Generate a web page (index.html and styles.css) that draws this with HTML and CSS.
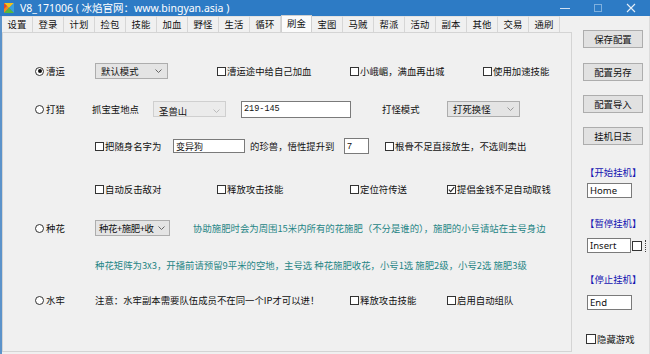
FILE: index.html
```html
<!DOCTYPE html>
<html>
<head>
<meta charset="utf-8" />
<title>V8_171006</title>
<link rel="stylesheet" href="styles.css">
</head>
<body>
<div class="win">
  <div class="titlebar">
    <svg class="logo" viewBox="0 0 12 12">
      <polygon points="1,1 6,6 1,11" fill="#f08a1c"/>
      <polygon points="1,1 11,1 6,6" fill="#f4c21a"/>
      <polygon points="11,1 11,11 6,6" fill="#3aa0e0"/>
      <polygon points="1,11 6,6 11,11" fill="#59b83a"/>
      <polygon points="1,1 4,4 1,7" fill="#e5452a"/>
    </svg>
    <div class="title">V8_171006 ( 冰焰官网：www.bingyan.asia )</div>
    <div class="ctrls">
      <span class="ctl"><svg width="10" height="10" viewBox="0 0 10 10"><line x1="0" y1="5.5" x2="10" y2="5.5" stroke="#cfe0f2" stroke-width="1"/></svg></span>
      <span class="ctl"><svg width="10" height="10" viewBox="0 0 10 10"><rect x="1.5" y="1.5" width="7" height="7" fill="none" stroke="#7fb0de" stroke-width="1"/></svg></span>
      <span class="ctl"><svg width="10" height="10" viewBox="0 0 10 10"><path d="M1 1L9 9M9 1L1 9" stroke="#e6eff8" stroke-width="1.1"/></svg></span>
    </div>
  </div>

  <div class="body">
    <div class="tabwrap">
      <ul class="tabs">
        <li>设置</li><li>登录</li><li>计划</li><li>捡包</li><li>技能</li><li>加血</li>
        <li>野怪</li><li>生活</li><li>循环</li><li class="on">刷金</li><li>宝图</li><li>马贼</li>
        <li>帮派</li><li>活动</li><li>副本</li><li>其他</li><li>交易</li><li>通刷</li>
      </ul>

      <div class="page">
        <!-- 漕运 -->
        <div class="row">
          <label class="radio on lead"><i></i>漕运</label>
          <div class="sel s73"><span>默认模式</span><svg width="7" height="4" viewBox="0 0 7 4"><polyline points="0.5,0.5 3.5,3.5 6.5,0.5" fill="none" stroke="#666"/></svg></div>
          <label class="chk c-add"><i></i>漕运途中给自己加血</label>
          <label class="chk c133"><i></i>小峨嵋，满血再出城</label>
          <label class="chk"><i></i>使用加速技能</label>
        </div>

        <!-- 打猎 -->
        <div class="row r2">
          <label class="radio lead2"><i></i>打猎</label>
          <span class="txt t-place">抓宝宝地点</span>
          <div class="sel s73 pale"><span>圣兽山</span><svg width="7" height="4" viewBox="0 0 7 4"><polyline points="0.5,0.5 3.5,3.5 6.5,0.5" fill="none" stroke="#bbb"/></svg></div>
          <input class="inp i-pos" type="text" value="219-145" />
          <span class="txt t-mode">打怪模式</span>
          <div class="sel s73"><span>打死换怪</span><svg width="7" height="4" viewBox="0 0 7 4"><polyline points="0.5,0.5 3.5,3.5 6.5,0.5" fill="none" stroke="#999"/></svg></div>
        </div>

        <div class="row r3">
          <span class="lead"></span>
          <label class="chk c78"><i></i>把随身名字为</label>
          <input class="inp i-name" type="text" value="变异狗" />
          <span class="txt t-pet">的珍兽，悟性提升到</span>
          <input class="inp i-num" type="text" value="7" />
          <label class="chk"><i></i>根骨不足直接放生，不选则卖出</label>
        </div>

        <div class="row r4">
          <span class="lead"></span>
          <label class="chk c122"><i></i>自动反击敌对</label>
          <label class="chk c133"><i></i>释放攻击技能</label>
          <label class="chk c97"><i></i>定位符传送</label>
          <label class="chk on"><i><svg width="7" height="7" viewBox="0 0 7 7"><polyline points="0.8,3.6 2.7,5.6 6.3,1.2" fill="none" stroke="#222" stroke-width="1.1"/></svg></i>提倡金钱不足自动取钱</label>
        </div>

        <!-- 种花 -->
        <div class="row r5">
          <label class="radio lead"><i></i>种花</label>
          <div class="sel s75 tight"><span>种花+施肥+收</span><svg width="7" height="4" viewBox="0 0 7 4"><polyline points="0.5,0.5 3.5,3.5 6.5,0.5" fill="none" stroke="#666"/></svg></div>
          <span class="note">协助施肥时会为周围15米内所有的花施肥（不分是谁的），施肥的小号请站在主号身边</span>
        </div>

        <div class="row r6">
          <span class="lead"></span>
          <span class="note flat">种花矩阵为3x3，开播前请预留9平米的空地，主号选 种花施肥收花，小号1选 施肥2级，小号2选 施肥3级</span>
        </div>

        <!-- 水牢 -->
        <div class="row r7">
          <label class="radio lead"><i></i>水牢</label>
          <span class="txt t-warn">注意：水牢副本需要队伍成员不在同一个IP才可以进！</span>
          <label class="chk c97"><i></i>释放攻击技能</label>
          <label class="chk"><i></i>启用自动组队</label>
        </div>
      </div>
    </div>

    <div class="side">
      <div class="btn">保存配置</div>
      <div class="btn">配置另存</div>
      <div class="btn">配置导入</div>
      <div class="btn last">挂机日志</div>

      <div class="hk hk1">【开始挂机】</div>
      <input class="inp key key1" type="text" value="Home" />
      <div class="hk hk2">【暂停挂机】</div>
      <div class="keyrow">
        <input class="inp key" type="text" value="Insert" />
        <label class="chk"><i></i></label>
        <span class="dots"></span>
      </div>
      <div class="hk hk3">【停止挂机】</div>
      <input class="inp key key3" type="text" value="End" />
      <label class="chk hide"><i></i>隐藏游戏</label>
    </div>
  </div>
</div>
</body>
</html>
```

FILE: styles.css
```css
*{ margin:0; padding:0; box-sizing:border-box; list-style:none;}
body{
  width:650px;
  height:354px;
  overflow:hidden;
  background:#f0f0f0;
  font-family:"Noto Sans CJK SC", sans-serif;
  font-size:9.4px;
  color:#111;
}
.win{ height:354px; display:flex; flex-direction:column;}

/* title bar */
.titlebar{ height:16px; background:#2d7bc5; display:flex; align-items:center; color:#fff;}
.logo{ width:12px; height:12px; margin:0 5px 0 3px;}
.title{ flex:1; font-family:"Noto Sans", "Noto Sans CJK SC", sans-serif; font-size:10.5px; line-height:16px;}
.ctrls{ display:flex; margin-right:3px;}
.ctl{ width:33px; height:16px; display:flex; align-items:center; justify-content:center;}

/* main */
.body{ flex:1; display:flex; border-left:2px solid #5c93ca; border-right:1px solid #dcdcdc;}
.tabwrap{ width:570px; display:flex; flex-direction:column;}
.tabs{ display:flex; height:16px;}
.tabs li{ width:31px; height:16px; line-height:15px; text-align:center; border-right:1px solid #d6d6d6; border-top:1px solid #e2e2e2; background:#f0f0f0;}
.tabs li.on{ background:#fbfbfb; height:17px; margin-top:-1px; border:1px solid #cfcfcf; border-bottom:none; position:relative; z-index:1;}
.page{ flex:1; margin-bottom:2px; border:1px solid #d4d4d4; background:#f0f0f0; padding:28px 0 0 32px;}

.row{ display:flex; align-items:center; height:20px; white-space:nowrap;}
.r2{ margin-top:18px;}
.r3{ margin-top:17px;}
.r4{ margin-top:23px;}
.r5{ margin-top:19px;}
.r6{ margin-top:17px;}
.r7{ margin-top:15px;}

.lead{ width:60px; flex:none;}
.lead2{ width:57px; flex:none;}

.radio{ display:flex; align-items:center; gap:2px;}
.radio i{ width:9px; height:9px; border:1px solid #333; border-radius:50%; background:#fff; position:relative;}
.radio.on i::after{ content:""; position:absolute; left:1.5px; top:1.5px; width:4px; height:4px; border-radius:50%; background:#111;}

.chk{ display:flex; align-items:center; gap:1px; flex:none;}
.chk i{ width:9px; height:9px; border:1px solid #333; background:#fff; display:flex; align-items:center; justify-content:center;}
.c-add{ width:133px; margin-left:49px;}
.c133{ width:133px;}
.c122{ width:122px;}
.c97{ width:97px;}
.c78{ width:78px;}

.sel{ height:16px; background:#e4e4e4; border:1px solid #adadad; display:flex; align-items:center; justify-content:space-between; padding:0 5px 0 5px; flex:none;}
.sel.pale{ background:#ebebeb; border-color:#cfcfcf; padding-top:3px;}
.sel.tight{ padding:0 4px 0 3px; letter-spacing:-0.4px;}
.s73{ width:73px;}
.s75{ width:75px;}

.inp{ height:15px; background:#fff; border:1px solid #7a7a7a; padding:0 2px; font-family:"Liberation Sans", "Noto Sans CJK SC", sans-serif; font-size:9px; color:#111; outline:none; flex:none;}
.i-pos{ width:110px; margin-left:15px; font-family:"Liberation Mono", monospace; font-size:8.5px; height:17px;}
.i-name{ width:72px; font-family:"Noto Sans CJK SC", sans-serif; height:14px;}
.i-num{ width:25px; height:16px; margin-right:16px;}

.txt{ flex:none;}
.t-place{ width:61px;}
.t-mode{ width:65px; margin-left:31px;}
.t-pet{ width:99px; padding-left:5px;}
.t-warn{ width:255px;}

.note{ color:#1f8585; margin-left:23px;}
.note.flat{ margin-left:0;}

/* right side */
.side{ flex:1; padding:14px 0 0 11px; display:flex; flex-direction:column; align-items:flex-start;}
.btn{ width:60px; height:18px; line-height:16px; text-align:center; background:#e1e1e1; border:1px solid #adadad; margin-bottom:14px;}
.btn:first-child{ margin-bottom:15px;}
.btn.last{ margin-bottom:0;}

.hk{ color:#1515b0; margin-left:2px; height:12px; line-height:12px;}
.hk1{ margin-top:21px;}
.hk2{ margin-top:19px;}
.hk3{ margin-top:20px;}
.key{ width:45px; margin-left:4px; font-size:9.5px; font-family:"Noto Sans", sans-serif; line-height:13px;}
.key1{ margin-top:5px;}
.key3{ margin-top:10px;}
.keyrow{ display:flex; align-items:center; margin-top:9px;}
.keyrow .key{ width:44px;}
.keyrow .chk{ margin-left:1px;}
.keyrow .chk i{ width:10px; height:10px;}
.dots{ width:1px; height:12px; border-left:1px dotted #444; margin-left:3px;}
.hide{ margin:22px 0 0 3px;}
.hide i{ width:10px; height:10px;}
```
